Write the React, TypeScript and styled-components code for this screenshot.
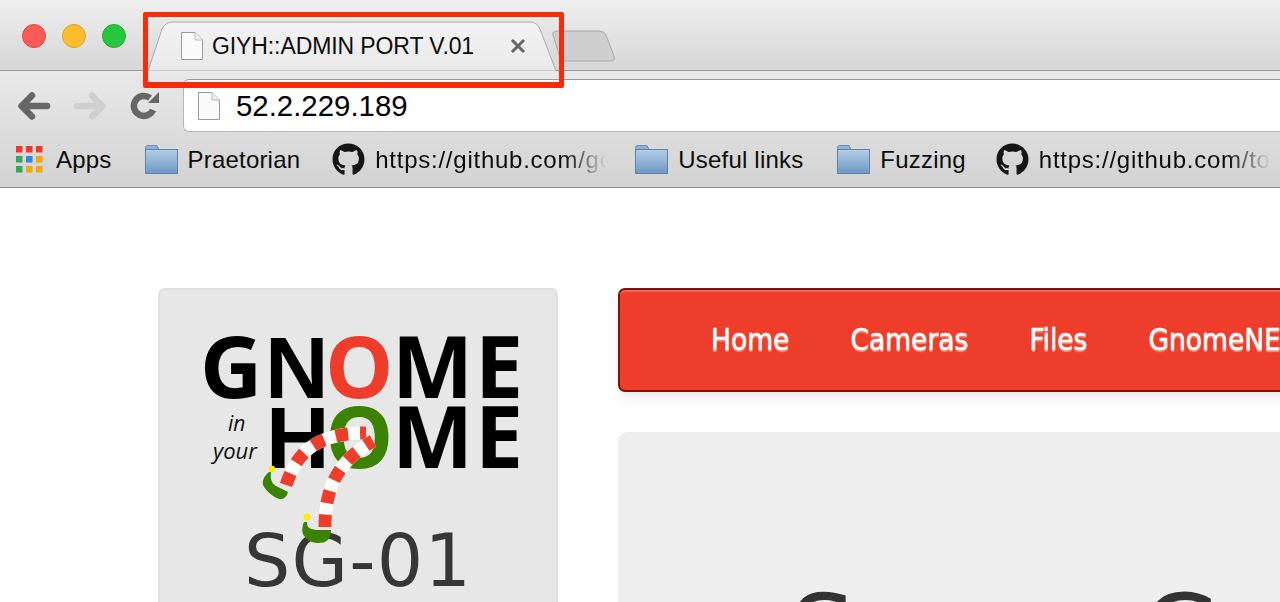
import React from "react";
import styled, { createGlobalStyle } from "styled-components";
import { FaGithub } from "react-icons/fa";

const Global = createGlobalStyle`
  html, body { margin: 0; padding: 0; width: 1280px; height: 602px; overflow: hidden; background: #fff; }
  * { box-sizing: border-box; }
`;

const Page = styled.div`
  position: relative;
  width: 1280px;
  height: 602px;
  overflow: hidden;
  font-family: "Liberation Sans", Arial, sans-serif;
`;

const TabStrip = styled.div`
  height: 71px;
  display: flex;
  align-items: flex-start;
  padding-left: 22px;
  background: linear-gradient(#f0f0f0, #ebebeb 12px, #d6d6d6);
  border-bottom: 1px solid #9b9b9b;
`;

const Lights = styled.div`
  display: flex;
  gap: 16px;
  margin-top: 24px;
`;

const Light = styled.span<{ $fill: string; $edge: string }>`
  width: 24px;
  height: 24px;
  border-radius: 50%;
  background: ${(p) => p.$fill};
  border: 1px solid ${(p) => p.$edge};
`;

const Tab = styled.div`
  position: relative;
  width: 408px;
  height: 50px;
  margin: 21px 0 0 22px;
  display: flex;
  align-items: flex-start;
  padding: 11px 0 0 33px;
  z-index: 1;
`;

const TabShape = styled.svg`
  position: absolute;
  inset: 0;
  z-index: -1;
`;

const FileIcon = styled.svg`
  flex: none;
`;

const TabTitle = styled.span`
  margin-left: 9px;
  margin-top: 1px;
  font-size: 23px;
  line-height: 26px;
  letter-spacing: -0.1px;
  color: #0c0c0c;
  white-space: nowrap;
`;

const TabClose = styled.svg`
  position: absolute;
  left: 362px;
  top: 17px;
`;

const NewTab = styled.svg`
  margin: 30px 0 0 -5px;
`;

const ToolArea = styled.div`
  height: 117px;
  background: linear-gradient(#e9e9e9, #d2d2d2);
  border-bottom: 1px solid #8f8f8f;
  display: flex;
  flex-direction: column;
`;

const Toolbar = styled.div`
  height: 62px;
  display: flex;
  align-items: flex-start;
  padding-left: 15px;
`;

const NavIcons = styled.svg`
  margin-top: 18px;
  flex: none;
`;

const Omnibox = styled.div`
  margin: 8px -4px 0 18px;
  flex: 1;
  height: 53px;
  background: #fff;
  border: 1px solid #b8b8b8;
  border-top-color: #9a9a9a;
  border-right: 0;
  border-radius: 6px 0 0 6px;
  display: flex;
  align-items: center;
  padding-left: 14px;
`;

const Url = styled.span`
  margin-left: 16px;
  font-size: 29.4px;
  color: #000;
  line-height: 32px;
`;

const Bookmarks = styled.div`
  flex: 1;
  display: flex;
  align-items: center;
  padding-left: 16px;
  margin-top: -1px;
`;

const Mark = styled.div<{ $after: number }>`
  display: flex;
  align-items: center;
  flex: none;
  margin-right: ${(p) => p.$after}px;
`;

const MarkText = styled.span`
  margin-left: 10px;
  font-size: 24px;
  line-height: 30px;
  letter-spacing: 0.2px;
  color: #0c0c0c;
  white-space: nowrap;
`;

const AppsText = styled(MarkText)`
  margin-left: 13px;
`;

const FadedLink = styled(MarkText)`
  width: 230px;
  overflow: hidden;
  letter-spacing: 0.75px;
  -webkit-mask-image: linear-gradient(90deg, #000 82%, rgba(0, 0, 0, 0.04) 100%);
  mask-image: linear-gradient(90deg, #000 82%, rgba(0, 0, 0, 0.04) 100%);
`;

const GitIcon = styled(FaGithub)`
  width: 33px;
  height: 33px;
  color: #151515;
  flex: none;
`;

const Callout = styled.div`
  position: absolute;
  left: 143px;
  top: 12px;
  width: 421px;
  height: 76px;
  border: 5px solid #fb2a07;
  border-bottom-width: 6px;
  border-radius: 2px;
  z-index: 5;
`;

const Site = styled.div`
  display: flex;
  align-items: flex-start;
  gap: 60px;
  padding: 100px 0 0 158px;
`;

const Side = styled.aside`
  flex: none;
  width: 400px;
  height: 400px;
  background: #e7e7e7;
  border: 2px solid #dfdfdf;
  border-radius: 7px;
  display: flex;
  flex-direction: column;
  align-items: center;
  padding: 40px 0 0 0;
`;

const Logo = styled.svg`
  position: relative;
  z-index: 1;
  flex: none;
  margin-left: 8px;
`;

const Station = styled.h2`
  margin: -29px 0 0 0;
  font-family: "DejaVu Sans", sans-serif;
  font-weight: 400;
  font-size: 73px;
  line-height: 88px;
  letter-spacing: 1.2px;
  color: #363636;
`;

const Main = styled.main`
  flex: none;
  width: 800px;
  display: flex;
  flex-direction: column;
  gap: 40px;
`;

const NavBar = styled.nav`
  height: 104px;
  background: #ee3e2b;
  border: 2px solid #7c1408;
  border-radius: 7px;
  box-shadow: inset 0 2px 0 #f4675a, 0 6px 12px rgba(0, 0, 0, 0.08);
  display: flex;
  align-items: center;
  gap: 61px;
  padding: 0 0 0 91px;
`;

const NavLink = styled.a`
  font-family: "DejaVu Sans Condensed", "DejaVu Sans", sans-serif;
  font-stretch: condensed;
  font-size: 29.5px;
  font-weight: 500;
  color: #fff;
  -webkit-text-stroke: 0.5px #fff;
  text-shadow: 0 2px 1px rgba(255, 190, 180, 0.6);
  white-space: nowrap;
`;

const Panel = styled.section`
  height: 400px;
  background: #eeeeee;
  border-radius: 9px;
  padding: 136px 0 0 172px;
`;

const Heading = styled.h1`
  margin: 0;
  font-family: "DejaVu Sans", sans-serif;
  font-weight: 400;
  font-size: 104px;
  line-height: 130px;
  word-spacing: 13px;
  color: #333;
  white-space: nowrap;
`;

const DocGlyph = ({ w, h }: { w: number; h: number }) => (
  <FileIcon width={w} height={h} viewBox="0 0 22 28">
    <path d="M.5.5H14L21.5 8V27.5H.5Z" fill="#fafafa" stroke="#999" />
    <path d="M14 .5V8H21.5" fill="#eee" stroke="#bbb" />
  </FileIcon>
);

const Folder = () => (
  <svg width="33" height="29" viewBox="0 0 33 29" style={{ flex: "none" }}>
    <defs>
      <linearGradient id="fold" x1="0" y1="0" x2="0" y2="1">
        <stop offset="0" stopColor="#b5cde6" />
        <stop offset="1" stopColor="#6d98c4" />
      </linearGradient>
    </defs>
    <path d="M2.5.5H12L14 4.5H.5V2.5Q.5.5 2.5.5Z" fill="#8fb0d2" stroke="#6d8dae" />
    <rect x=".5" y="4.5" width="32" height="24" fill="url(#fold)" stroke="#5f83a8" />
  </svg>
);

const AppsGrid = () => {
  const cols = [
    ["#f0392b", "#f0392b", "#f0392b"],
    ["#34a853", "#2f86e8", "#f4a700"],
    ["#34a853", "#f4a700", "#f4a700"],
  ];
  return (
    <svg width="27" height="27" viewBox="0 0 27 27" style={{ flex: "none" }}>
      {cols.map((row, y) =>
        row.map((c, x) => <rect key={`${x}${y}`} x={x * 10} y={y * 10} width="6.5" height="6.5" fill={c} />)
      )}
    </svg>
  );
};

const leg1 = "M286 485C296 456 312 433 366 433";
const leg2 = "M325 527C325 490 336 462 373 441";

const ElfLogo = () => (
  <Logo width="325" height="216" viewBox="200 330 325 216">
    <g fontFamily="'Open Sans', sans-serif" fontWeight="700" fontSize="86">
      <text x="200 265 325 392 475" y="398" fill="#000">
        G
        <tspan fontFamily="'Liberation Sans', sans-serif" fontSize="88">N</tspan>
        <tspan fill="#ee3e2b">O</tspan>
        <tspan>M</tspan>
        <tspan>E</tspan>
      </text>
      <text x="266 325 392 475" y="468" fill="#000">
        <tspan fontFamily="'Liberation Sans', sans-serif" fontSize="88">H</tspan>
        <tspan fill="#3a8200">O</tspan>
        <tspan>M</tspan>
        <tspan>E</tspan>
      </text>
    </g>
    <g fontFamily="'Open Sans', sans-serif" fontStyle="italic" fill="#111">
      <text x="228" y="431" fontSize="21">in</text>
      <text x="213" y="459" fontSize="22">your</text>
    </g>
    <path d={leg1} fill="none" stroke="#fff" strokeWidth="13" />
    <path d={leg1} fill="none" stroke="#ee3e2b" strokeWidth="13" strokeDasharray="12.5 12" />
    <path d={leg2} fill="none" stroke="#fff" strokeWidth="13" />
    <path d={leg2} fill="none" stroke="#ee3e2b" strokeWidth="13" strokeDasharray="12.5 11.5" />
    <path d="M269 472C264 476 262 481 263 485C266 491 272 496 279 499C284 500 287 496 288 492C284 490 280 488 276 486C272 484 270 479 271 472Z" fill="#3a8200" />
    <path d="M304 522C302 526 302 532 303 534C306 540 312 543 318 543C326 543 331 540 331 530L318 530C312 530 306 528 307 522Z" fill="#3a8200" />
    <circle cx="272" cy="469" r="3.2" fill="#f8f000" />
    <circle cx="307" cy="517" r="3.5" fill="#f8f000" />
  </Logo>
);

export default function App() {
  return (
    <Page>
      <Global />
      <TabStrip>
        <Lights>
          <Light $fill="#fc5b57" $edge="#e2463f" />
          <Light $fill="#fdbc2e" $edge="#e1a325" />
          <Light $fill="#27c63f" $edge="#1fab34" />
        </Lights>
        <Tab>
          <TabShape width="408" height="50" viewBox="0 0 408 50">
            <defs>
              <linearGradient id="tabfill" x1="0" y1="0" x2="0" y2="1">
                <stop offset="0" stopColor="#f3f3f3" />
                <stop offset="1" stopColor="#e9e9e9" />
              </linearGradient>
            </defs>
            <path d="M0 50L14 8Q17 1 25 1H382Q389 1 392 8L408 50Z" fill="url(#tabfill)" stroke="#a9a9a9" />
          </TabShape>
          <DocGlyph w={22} h={28} />
          <TabTitle>GIYH::ADMIN PORT V.01</TabTitle>
          <TabClose width="16" height="16" viewBox="0 0 16 16">
            <path d="M2 2L14 14M14 2L2 14" stroke="#666" strokeWidth="3" />
          </TabClose>
        </Tab>
        <NewTab width="65" height="32" viewBox="0 0 65 32">
          <path d="M10 31H59Q65 31 63 26L55 5Q53 1 48 1H6Q1 1 2 5Z" fill="#cfcfcf" stroke="#a8a8a8" />
        </NewTab>
      </TabStrip>
      <ToolArea>
        <Toolbar>
          <NavIcons width="150" height="32" viewBox="0 0 150 32">
            <g fill="none" strokeLinecap="round" strokeLinejoin="round" strokeWidth="6.5">
              <path d="M32 17H7M17 6.5L6.5 17L17 27.5" stroke="#666" />
              <path d="M62 17H87M77 6.5L87.5 17L77 27.5" stroke="#cfcfcf" />
              <path d="M138 21A10 10 0 1 1 135 9" stroke="#666" strokeLinecap="butt" />
            </g>
            <path d="M144 3V14H133Z" fill="#666" />
          </NavIcons>
          <Omnibox>
            <DocGlyph w={22} h={30} />
            <Url>52.2.229.189</Url>
          </Omnibox>
        </Toolbar>
        <Bookmarks>
          <Mark $after={33}>
            <AppsGrid />
            <AppsText>Apps</AppsText>
          </Mark>
          <Mark $after={32}>
            <Folder />
            <MarkText>Praetorian</MarkText>
          </Mark>
          <Mark $after={30}>
            <GitIcon />
            <FadedLink>https://github.com/go</FadedLink>
          </Mark>
          <Mark $after={34}>
            <Folder />
            <MarkText>Useful links</MarkText>
          </Mark>
          <Mark $after={30}>
            <Folder />
            <MarkText>Fuzzing</MarkText>
          </Mark>
          <Mark $after={0}>
            <GitIcon />
            <FadedLink>https://github.com/to</FadedLink>
          </Mark>
        </Bookmarks>
      </ToolArea>
      <Callout />
      <Site>
        <Side>
          <ElfLogo />
          <Station>SG-01</Station>
        </Side>
        <Main>
          <NavBar>
            <NavLink>Home</NavLink>
            <NavLink>Cameras</NavLink>
            <NavLink>Files</NavLink>
            <NavLink>GnomeNET</NavLink>
          </NavBar>
          <Panel>
            <Heading>Super Gnome 01</Heading>
          </Panel>
        </Main>
      </Site>
    </Page>
  );
}
